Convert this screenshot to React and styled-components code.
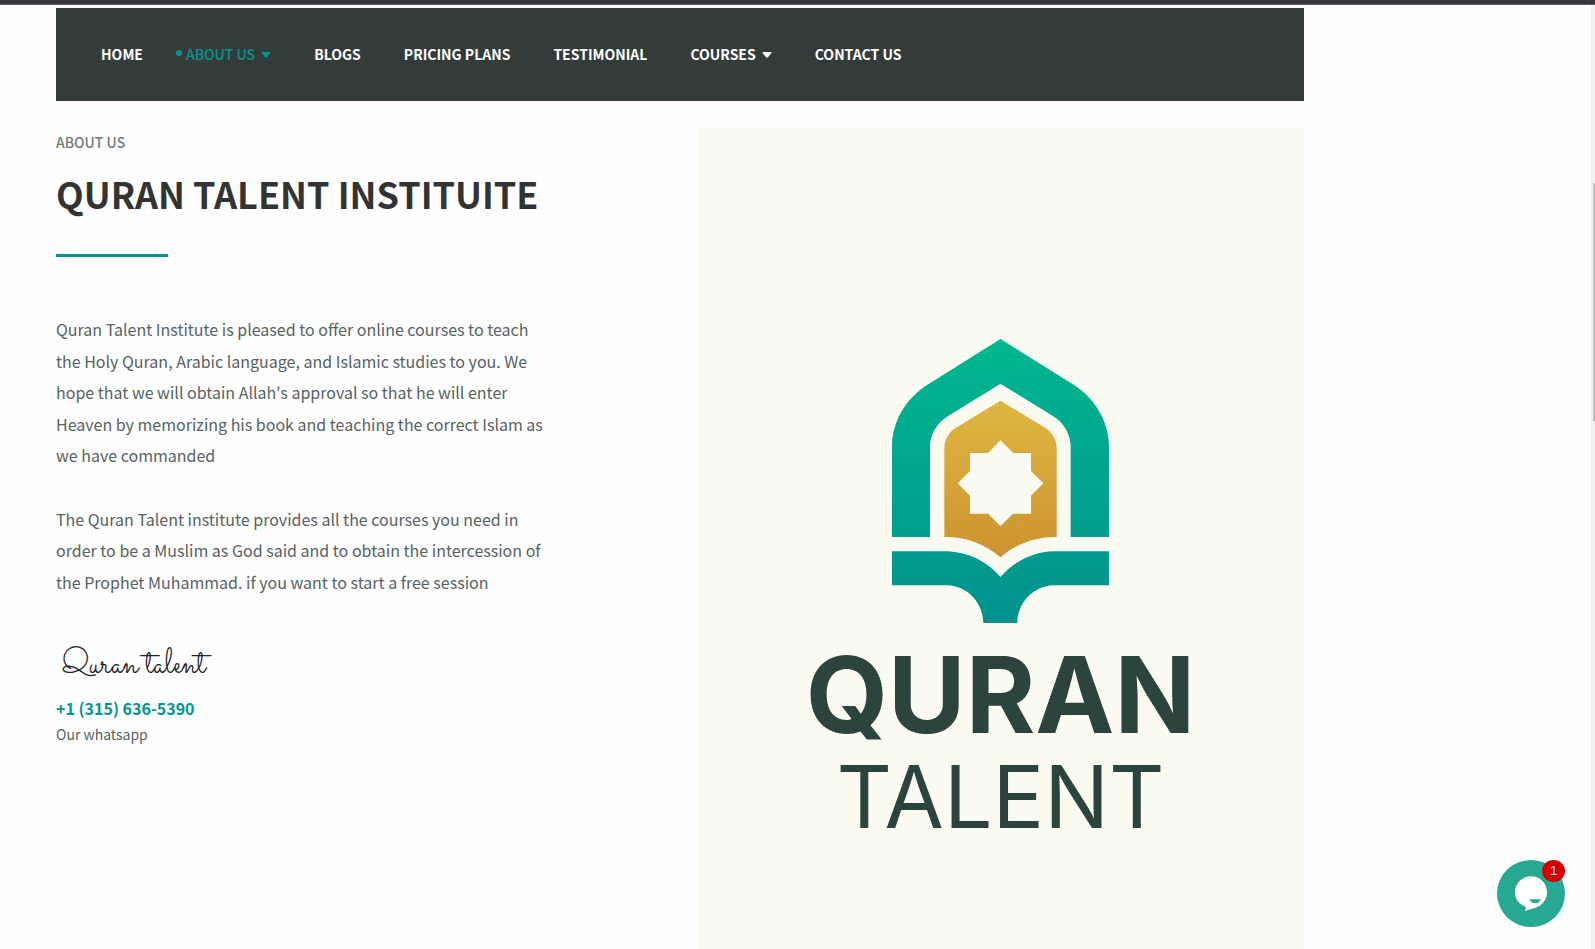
import React from "react";
import styled, { createGlobalStyle } from "styled-components";

const teal = "#00968f";
const latin = `"Noto Sans CJK SC", "Noto Sans", sans-serif`;

const GlobalStyle = createGlobalStyle`
  *, *::before, *::after { box-sizing: border-box; }
  body { margin: 0; background: #fefefe; color: #566262; font-family: ${latin}; }
  h1, p, figure, ul { margin: 0; padding: 0; }
  a { color: inherit; text-decoration: none; }
`;

const Page = styled.div`
  display: flex;
  flex-direction: column;
  min-height: 100vh;
`;

const TopStrip = styled.div`
  height: 5px;
  background: #35363a;
  border-bottom: 1px solid #606165;
`;

const Container = styled.div`
  flex: 1;
  display: flex;
  flex-direction: column;
  width: calc(100% - 112px);
  max-width: 1248px;
  margin: 3px 56px 0;
`;

const NavBar = styled.nav`
  background: #343c3b;
  padding: 34px 45px;
`;

const NavList = styled.ul`
  display: flex;
  flex-wrap: wrap;
  gap: 0 43px;
  list-style: none;
`;

const NavLink = styled.a`
  position: relative;
  display: flex;
  align-items: center;
  gap: 6px;
  color: ${(p) => (p.$active ? teal : "#fff")};
  font-size: 14px;
  font-weight: ${(p) => (p.$active ? 500 : 700)};
  line-height: 25px;
  white-space: nowrap;

  &::before {
    content: "";
    display: ${(p) => (p.$active ? "block" : "none")};
    position: absolute;
    left: -10px;
    top: 8px;
    width: 6px;
    height: 6px;
    border-radius: 50%;
    background: ${teal};
  }
`;

const Columns = styled.main`
  flex: 1;
  display: grid;
  grid-template-columns: minmax(0, 1fr) minmax(0, 607px);
  margin-top: 27px;
`;

const Intro = styled.section`
  padding-right: 144px;
`;

const Eyebrow = styled.p`
  color: #737a7a;
  font-size: 14px;
  font-weight: 500;
  line-height: 28px;
`;

const Title = styled.h1`
  margin-top: 15px;
  color: #333;
  font-size: 36px;
  font-weight: 700;
  line-height: 44px;
  white-space: nowrap;
`;

const Rule = styled.div`
  width: 112px;
  height: 3px;
  margin-top: 39px;
  background: ${teal};
`;

const Story = styled.div`
  display: grid;
  gap: 32px;
  margin-top: 57px;
  font-size: 16px;
  line-height: 1.97;
`;

const Signature = styled.p`
  margin-top: 49px;
  padding-left: 5px;
  color: #222;
  font-family: Sacramento, "Dancing Script", cursive;
  font-size: 34px;
  line-height: 36px;
`;

const Phone = styled.a`
  display: block;
  margin-top: 12px;
  color: ${teal};
  font-size: 16px;
  font-weight: 700;
  line-height: 26px;
`;

const Note = styled.p`
  font-size: 14px;
  line-height: 26px;
`;

const Poster = styled.figure`
  display: flex;
  flex-direction: column;
  align-items: center;
  padding-top: 211px;
  background: #fbfaf1;
  color: #2b443e;
  font-family: Inter, sans-serif;
`;

const Wordmark = styled.span`
  margin-top: 19px;
  font-size: 106px;
  font-weight: 700;
  line-height: 106px;
`;

const Subwordmark = styled.span`
  margin-top: 6px;
  font-size: 86px;
  font-weight: 400;
  line-height: 86px;
`;

const ChatButton = styled.button`
  position: fixed;
  right: 30px;
  bottom: 22px;
  width: 68px;
  height: 67px;
  padding: 0;
  border: 0;
  border-radius: 50%;
  background: #26a892;
  cursor: pointer;

  svg { display: block; }
`;

const Badge = styled.span`
  position: absolute;
  top: 0;
  right: 0;
  width: 23px;
  height: 22px;
  border-radius: 50%;
  background: #d40000;
  color: #fff;
  font: 13px/22px "Liberation Sans", sans-serif;
  text-align: center;
`;

const ScrollTrack = styled.div`
  position: fixed;
  top: 5px;
  right: 0;
  bottom: 0;
  width: 4px;
  padding: 178px 0 0 2px;
  background: #f1f1f1;
`;

const ScrollThumb = styled.div`
  height: 238px;
  background: #c1c1c1;
`;

function Caret() {
  return (
    <svg width="10" height="6" viewBox="0 0 10 6" fill="currentColor" aria-hidden="true">
      <path d="M1 0H9Q10 0 9.400 1L6 5.200Q5 6 4 5.200L.6 1Q0 0 1 0Z" />
    </svg>
  );
}

function Emblem() {
  return (
    <svg width="217" height="284" viewBox="66 57 651 852" role="img" aria-label="Arch and open book">
      <defs>
        <linearGradient id="green" gradientUnits="userSpaceOnUse" x1="360" y1="57" x2="391" y2="909">
          <stop offset="0" stopColor="#00b78f" />
          <stop offset="1" stopColor="#00928e" />
        </linearGradient>
        <linearGradient id="gold" x1="0" y1="0" x2="0" y2="1">
          <stop offset="0" stopColor="#deb842" />
          <stop offset="1" stopColor="#cd9230" />
        </linearGradient>
      </defs>
      <path
        fill="url(#green)"
        d="M391.500 57L606 191C677 234 717 306 717 381V651H602V381C602 344 582 309 550 289L391.500 191L233 289C201 309 180 344 180 381V651H66V381C66 306 106 234 177 191Z"
      />
      <path
        fill="url(#gold)"
        d="M391.500 242L525 323C547 336 560 359 560 384V651C496 650 437 672 391.500 712C346 672 287 650 223 651V384C223 359 236 336 258 323Z"
      />
      <path
        fill="#fbfaf1"
        d="M391.500 361L429.500 399H483V453L520 490L483 527V581H429.500L391.500 618L354.500 581H300V527L263 490L300 453V399H354.500Z"
      />
      <path
        fill="url(#green)"
        d="M66 694H232C295 696 352 725 391.500 771C431 725 488 696 551 694H717V796H551C490 798 443 848 442 909H340C339 848 292 798 232 796H66Z"
      />
    </svg>
  );
}

const links = [
  { label: "HOME" },
  { label: "ABOUT US", menu: true, active: true },
  { label: "BLOGS" },
  { label: "PRICING PLANS" },
  { label: "TESTIMONIAL" },
  { label: "COURSES", menu: true },
  { label: "CONTACT US" },
];

export default function App() {
  return (
    <Page>
      <GlobalStyle />
      <TopStrip />
      <Container>
        <NavBar aria-label="Main">
          <NavList>
            {links.map((l) => (
              <li key={l.label}>
                <NavLink href="#" $active={l.active} aria-current={l.active ? "page" : undefined}>
                  {l.label}
                  {l.menu && <Caret />}
                </NavLink>
              </li>
            ))}
          </NavList>
        </NavBar>
        <Columns>
          <Intro>
            <Eyebrow>ABOUT US</Eyebrow>
            <Title>QURAN TALENT INSTITUITE</Title>
            <Rule />
            <Story>
              <p>
                Quran Talent Institute is pleased to offer online courses to teach the Holy Quran,
                Arabic language, and Islamic studies to you. We hope that we will obtain Allah's
                approval so that he will enter Heaven by memorizing his book and teaching the
                correct Islam as we have commanded
              </p>
              <p>
                The Quran Talent institute provides all the courses you need in order to be a
                Muslim as God said and to obtain the intercession of the Prophet Muhammad. if you
                want to start a free session
              </p>
            </Story>
            <Signature>Quran talent</Signature>
            <Phone href="tel:+13156365390">+1 (315) 636-5390</Phone>
            <Note>Our whatsapp</Note>
          </Intro>
          <Poster>
            <Emblem />
            <Wordmark>QURAN</Wordmark>
            <Subwordmark>TALENT</Subwordmark>
          </Poster>
        </Columns>
      </Container>
      <ScrollTrack aria-hidden="true">
        <ScrollThumb />
      </ScrollTrack>
      <ChatButton type="button" aria-label="Open chat, 1 new message">
        <svg width="68" height="67" viewBox="51 29 204 201" aria-hidden="true">
          <path
            fill="#fff"
            d="M153 78C180 78 201 99 201 126C201 146 190 160 178 167C165 174 151 177 135 182L138 170C119 164 105 147 105 126C105 99 126 78 153 78Z"
          />
          <path fill="#26a892" d="M149 147H182C180 155 174 159 165 159C157 159 151 155 149 147Z" />
        </svg>
        <Badge>1</Badge>
      </ChatButton>
    </Page>
  );
}
